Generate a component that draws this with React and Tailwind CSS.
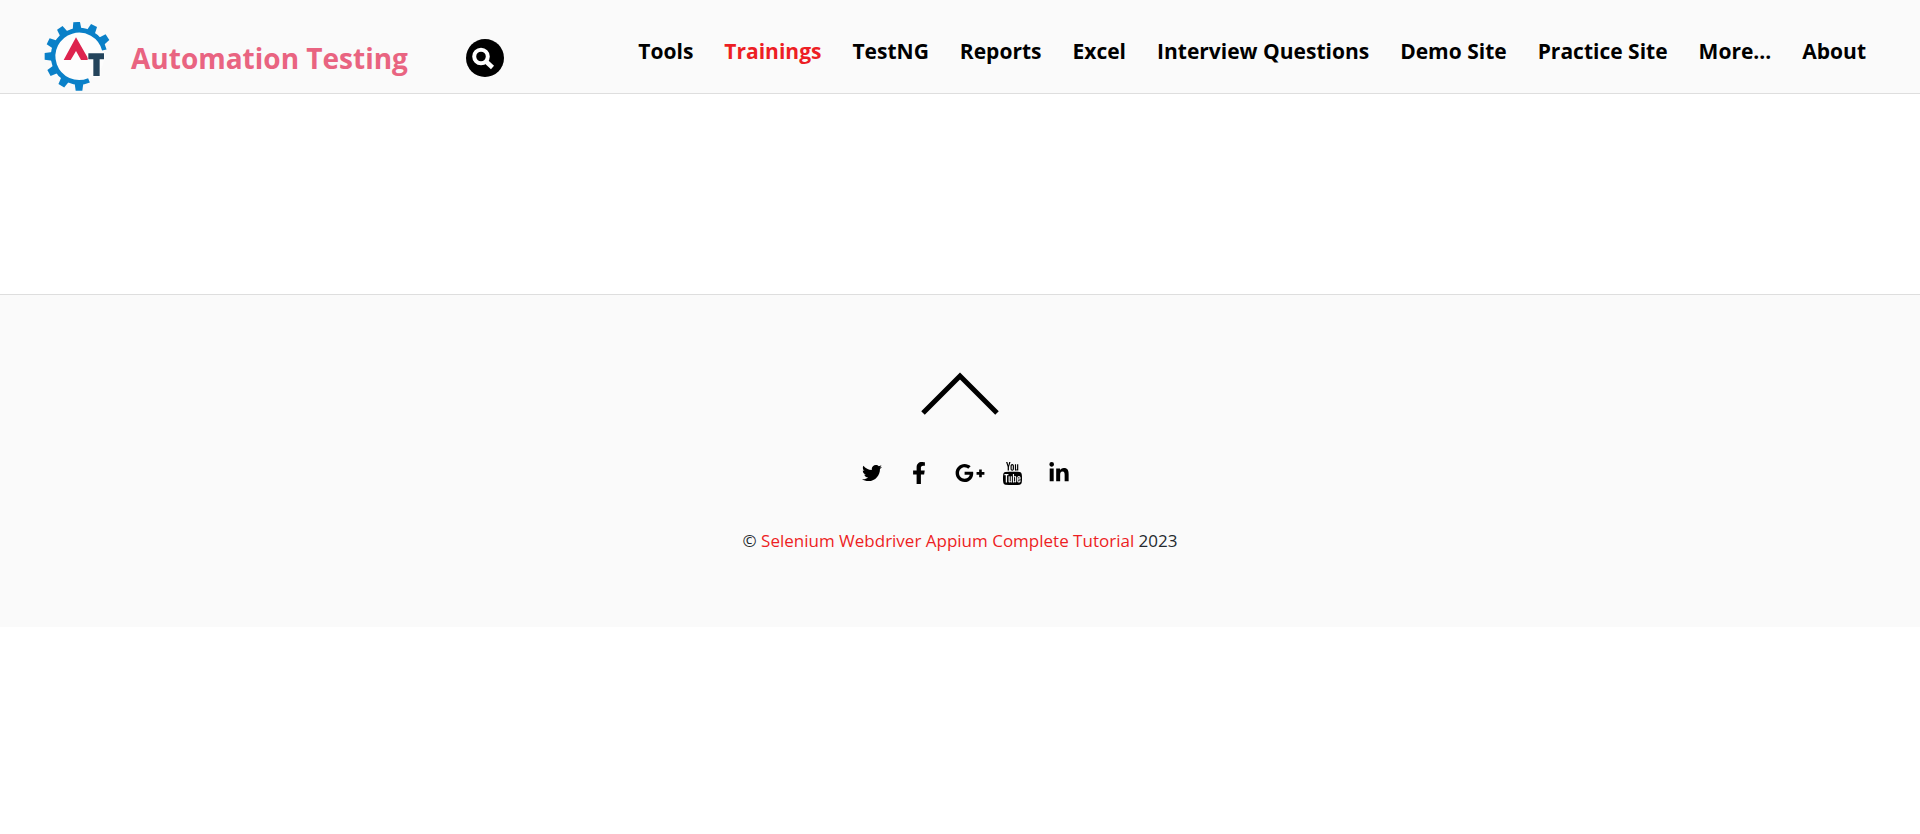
import { FaTwitter, FaFacebookF, FaGooglePlusG, FaLinkedinIn } from "react-icons/fa";
import { TfiYoutube } from "react-icons/tfi";

const NAV = [
  "Tools",
  "Trainings",
  "TestNG",
  "Reports",
  "Excel",
  "Interview Questions",
  "Demo Site",
  "Practice Site",
  "More...",
  "About",
];

const TEETH = [-94, -64, -34, -124, -154, 180, 151, 121, 90];

function Logo() {
  return (
    <svg viewBox="36 36 210 213" className="h-[71px] w-[70px] shrink-0" aria-hidden="true">
      <circle cx="147" cy="139" r="76" fill="#fdfdfd" />
      <g fill="#0a80c8">
        {TEETH.map((a) => (
          <path key={a} d="M74 -14 L103 -10 V10 L74 14Z" transform={`translate(147 139) rotate(${a})`} />
        ))}
      </g>
      <path d="M223 120 A78 78 0 1 0 177 211" fill="none" stroke="#0a80c8" strokeWidth="14" />
      <path d="M138 82 L177 150 H153 L138 123 L122 150 H101Z" fill="#dd234e" />
      <path d="M175 130H222V148H209V198H190V148H175Z" fill="#24445c" stroke="#fff" strokeWidth="4" paintOrder="stroke" />
    </svg>
  );
}

export default function App() {
  return (
    <div className="font-['Open_Sans',sans-serif] text-black">
      <header className="flex h-[94px] items-start justify-between border-b border-[#dedede] bg-[#fafafa] pl-[42px] pr-[54px]">
        <div className="flex items-center pt-[22px]">
          <a href="#home" className="flex items-center gap-[19px]">
            <Logo />
            <span className="text-[28px] font-bold leading-9 text-[#e96481]">Automation Testing</span>
          </a>
          <button
            type="button"
            aria-label="Search"
            className="ml-[58px] flex size-[38px] items-center justify-center rounded-full bg-black text-white"
          >
            <svg viewBox="0 0 38 38" className="size-[38px]" fill="none" stroke="currentColor" strokeWidth="4" aria-hidden="true">
              <circle cx="15" cy="17.500" r="6.800" />
              <path d="M19.500 22 L26.500 28.500" strokeWidth="4.500" />
            </svg>
          </button>
        </div>
        <nav className="pt-9">
          <ul className="flex gap-[31px] text-[21px] font-bold leading-[30px]">
            {NAV.map((item) => (
              <li key={item}>
                <a href="#nav" className={item === "Trainings" ? "text-[#ed1e24]" : "text-black"}>
                  {item}
                </a>
              </li>
            ))}
          </ul>
        </nav>
      </header>
      <main className="h-[200px] bg-white" />
      <footer className="flex flex-col items-center border-t border-[#dedede] bg-[#fafafa] pb-[71px] pt-[77px]">
        <a href="#top" aria-label="Back to top">
          <svg viewBox="0 0 80 44" className="h-11 w-20" fill="none" stroke="#000" strokeWidth="5" aria-hidden="true">
            <path d="M3 41 L40 4 L77 41" />
          </svg>
        </a>
        <ul className="mt-[45px] flex h-6 items-center pl-[18px]">
          <li className="flex w-[47px] justify-center">
            <a href="#twitter" aria-label="Twitter"><FaTwitter size={20} /></a>
          </li>
          <li className="flex w-[47px] justify-center">
            <a href="#facebook" aria-label="Facebook"><FaFacebookF size={22} /></a>
          </li>
          <li className="flex w-[55px] justify-center">
            <a href="#google" aria-label="Google Plus"><FaGooglePlusG size={30} /></a>
          </li>
          <li className="flex w-[31px] justify-center">
            <a href="#youtube" aria-label="YouTube"><TfiYoutube size={23} /></a>
          </li>
          <li className="flex w-[62px] justify-center">
            <a href="#linkedin" aria-label="LinkedIn"><FaLinkedinIn size={22} /></a>
          </li>
        </ul>
        <p className="mt-[41px] text-[17px] leading-[30px] text-[#24292e]">
          © <a href="#tutorial" className="text-[#ed1e24]">Selenium Webdriver Appium Complete Tutorial</a> 2023
        </p>
      </footer>
    </div>
  );
}
